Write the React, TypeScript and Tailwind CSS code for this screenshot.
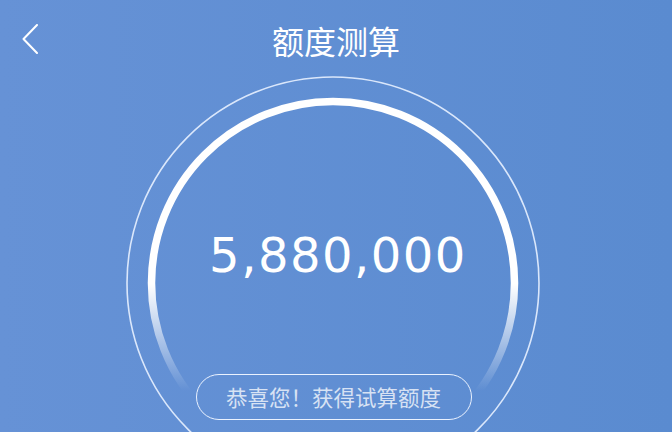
import React from 'react'

function Ring() {
  return (
    <svg
      className="absolute inset-0 pointer-events-none"
      width={672}
      height={432}
      viewBox="0 0 672 432"
    >
      <defs>
        <linearGradient id="arcFade" gradientUnits="userSpaceOnUse" x1="0" y1="95" x2="0" y2="400">
          <stop offset="0" stopColor="#ffffff" stopOpacity="1" />
          <stop offset="0.62" stopColor="#ffffff" stopOpacity="1" />
          <stop offset="0.97" stopColor="#ffffff" stopOpacity="0" />
        </linearGradient>
      </defs>
      <circle cx="333" cy="283" r="206" fill="none" stroke="#e8f1ff" strokeOpacity="0.9" strokeWidth="1.6" />
      <circle cx="333" cy="283" r="181.5" fill="none" stroke="url(#arcFade)" strokeWidth="7.5" />
    </svg>
  )
}

export default function App() {
  return (
    <div className="relative w-[672px] h-[432px] overflow-hidden bg-gradient-to-r from-[#6692d6] to-[#5a8bd0] text-white">
      <Ring />

      {/* header */}
      <div className="relative flex items-center justify-center h-[80px]">
        <button type="button" aria-label="返回" className="absolute left-[22px] top-[24px] w-[16px] h-[30px]">
          <svg width="16" height="30" viewBox="0 0 16 30" fill="none">
            <polyline points="15,1 1.5,15 15,29" stroke="#ffffff" strokeWidth="2" strokeLinecap="round" strokeLinejoin="round" />
          </svg>
        </button>
        <h1 className="text-[32px] leading-none font-normal font-['Noto_Sans_CJK_SC',sans-serif]">额度测算</h1>
      </div>

      {/* amount */}
      <div className="relative flex flex-col items-center">
        <div className="mt-[151px] ml-[4px] text-[48px] leading-none tracking-[1.5px] font-['DejaVu_Sans',sans-serif]">
          5,880,000
        </div>
        <div className="mt-[95px] mr-[5px] w-[276px] h-[46px] rounded-full border-[1.5px] border-[#eaf2ff] flex items-center justify-center">
          <span className="text-[21.5px] leading-none text-white/75 font-['Noto_Sans_CJK_SC',sans-serif]">
            恭喜您！获得试算额度
          </span>
        </div>
      </div>
    </div>
  )
}
